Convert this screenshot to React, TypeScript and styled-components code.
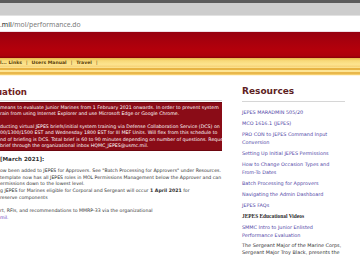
import React from 'react';
import styled, { createGlobalStyle } from 'styled-components';

const Global = createGlobalStyle`
  html, body { margin: 0; padding: 0; background: #fff; }
  body { width: 360px; height: 255px; overflow: hidden; font-family: "DejaVu Sans", Verdana, sans-serif; }
  * { box-sizing: border-box; }
`;

const Page = styled.div`
  width: 360px;
  height: 255px;
  overflow: hidden;
  display: flex;
  flex-direction: column;
  background: #fff;
`;

const TopStrip = styled.div`
  height: 3px;
  flex: none;
  background: #5b5b5b;
`;

const TabBar = styled.div`
  height: 13px;
  flex: none;
  background: #cdcdcd;
  border-bottom: 1px solid #e2e2e2;
`;

const AddressBar = styled.div`
  height: 16px;
  flex: none;
  display: flex;
  align-items: center;
  padding-top: 1px;
  background: #fff;
  border-bottom: 1px solid #efdfe6;
  font-family: "Noto Sans", "DejaVu Sans", sans-serif;
  font-size: 6.8px;
  color: #7a7a7a;
  white-space: nowrap;
`;

const Host = styled.span`
  color: #222;
`;

const SiteHeader = styled.div`
  height: 26px;
  flex: none;
  background: linear-gradient(#960010 0%, #a8000d 35%, #b4000b 70%, #ad000b 92%, #850008 100%);
`;

const NavBar = styled.div`
  height: 9px;
  flex: none;
  display: flex;
  align-items: center;
  gap: 4px;
  background: linear-gradient(#e9b447 0%, #f8d979 30%, #fde48f 70%, #f6d277 100%);
  font-size: 4.6px;
  font-weight: bold;
  color: #5a3c06;
  white-space: nowrap;
`;

const NavSep = styled.span`
  font-weight: normal;
  color: #6b4a10;
`;

const NavStripes = styled.div`
  height: 9px;
  flex: none;
  background: linear-gradient(
    #fbe08c 0px, #fbe08c 1px,
    #e7b344 1px, #e7b344 3px,
    #fde596 3px, #fde596 5px,
    #e9b84c 5px, #e9b84c 7px,
    #f7d57c 7px, #f3c860 8px,
    #fff6dc 8px, #fff6dc 9px
  );
`;

const Content = styled.div`
  flex: 1;
  display: flex;
  gap: 20px;
  overflow: hidden;
`;

const Main = styled.div`
  width: 222px;
  flex: none;
  overflow: hidden;
`;

const PageTitle = styled.h1`
  margin: 0;
  padding: 10px 0 2px;
  line-height: 12px;
  font-size: 8.6px;
  font-weight: bold;
  color: #701d22;
  border-bottom: 1px solid #d6d6d6;
  white-space: nowrap;
  text-indent: -4px;
`;

const Notice = styled.div`
  margin-top: 1px;
  padding: 2px 0 1px;
  background: #8a0c17;
  border-top: 1px solid #6d0710;
  border-bottom: 1px solid #6d0710;
  color: #fff;
  font-size: 4.72px;
`;

const Para = styled.div<{ $gap?: number }>`
  margin-top: ${(p) => p.$gap ?? 0}px;
`;

const Line = styled.div`
  line-height: 6.4px;
  white-space: nowrap;
`;

const SubHead = styled.div`
  margin-top: 4px;
  line-height: 8px;
  font-size: 5.6px;
  font-weight: bold;
  color: #333;
  white-space: nowrap;
`;

const Body = styled.div`
  font-size: 4.65px;
  color: #333;
`;

const BodyLine = styled.div`
  line-height: 6.3px;
  white-space: nowrap;
`;

const Item = styled.div<{ $gap?: number }>`
  margin-top: ${(p) => p.$gap ?? 0}px;
`;

const InlineLink = styled.span`
  color: #6a36b8;
`;

const Side = styled.div`
  width: 110px;
  flex: none;
`;

const SideTitle = styled.h2`
  margin: 0;
  width: 103px;
  padding: 9px 0 4px;
  line-height: 12px;
  font-size: 9px;
  font-weight: bold;
  color: #5e1f24;
  border-bottom: 1px solid #d6d6d6;
  white-space: nowrap;
`;

const LinkList = styled.div`
  display: flex;
  flex-direction: column;
  gap: 3px;
  padding-top: 6px;
`;

const SideLink = styled.a`
  display: block;
  font-size: 4.9px;
  line-height: 8px;
  color: #4f46a6;
  text-decoration: none;
  white-space: nowrap;
`;

const SideLabel = styled.div`
  font-family: "Liberation Serif", "Times New Roman", serif;
  font-size: 5.4px;
  font-weight: bold;
  line-height: 8px;
  color: #2b2b2b;
  white-space: nowrap;
`;

const SideText = styled.div`
  font-size: 4.9px;
  line-height: 6.5px;
  color: #333;
  white-space: nowrap;
`;

export default function App() {
  return (
    <>
      <Global />
      <Page>
        <TopStrip />
        <TabBar />
        <AddressBar>
          .<Host>mil</Host>/mol/performance.do
        </AddressBar>
        <SiteHeader />
        <NavBar>
          <span>l... Links</span>
          <NavSep>|</NavSep>
          <span>Users Manual</span>
          <NavSep>|</NavSep>
          <span>Travel</span>
          <NavSep>|</NavSep>
        </NavBar>
        <NavStripes />
        <Content>
          <Main>
            <PageTitle>uation</PageTitle>
            <Notice>
              <Para>
                <Line>means to evaluate Junior Marines from 1 February 2021 onwards. In order to prevent system</Line>
                <Line>rain from using Internet Explorer and use Microsoft Edge or Google Chrome.</Line>
              </Para>
              <Para $gap={6}>
                <Line>ducting virtual JEPES briefs/initial system training via Defense Collaboration Service (DCS) on</Line>
                <Line>00/1300/1500 EST and Wednesday 1800 EST for III MEF Units. Will flex from this schedule to</Line>
                <Line>nd of briefing is DCS. Total brief is 60 to 90 minutes depending on number of questions. Request</Line>
                <Line>brief through the organizational inbox HQMC_JEPES@usmc.mil.</Line>
              </Para>
            </Notice>
            <SubHead>[March 2021]:</SubHead>
            <Body>
              <Item $gap={5}>
                <BodyLine>ow been added to JEPES for Approvers. See "Batch Processing for Approvers" under Resources.</BodyLine>
                <BodyLine>template now has all JEPES roles in MOL Permissions Management below the Approver and can</BodyLine>
                <BodyLine>ermissions down to the lowest level.</BodyLine>
              </Item>
              <Item $gap={1}>
                <BodyLine>g JEPES for Marines eligible for Corporal and Sergeant will occur <b>1 April 2021</b> for</BodyLine>
                <BodyLine>reserve components</BodyLine>
              </Item>
              <Item $gap={7.5}>
                <BodyLine>rt, RFIs, and recommendations to MMRP-33 via the organizational</BodyLine>
                <BodyLine><InlineLink>mil.</InlineLink></BodyLine>
              </Item>
            </Body>
          </Main>
          <Side>
            <SideTitle>Resources</SideTitle>
            <LinkList>
              <SideLink href="#">JEPES MARADMIN 505/20</SideLink>
              <SideLink href="#">MCO 1616.1 (JEPES)</SideLink>
              <SideLink href="#">PRO CON to JEPES Command Input<br />Conversion</SideLink>
              <SideLink href="#">Setting Up Initial JEPES Permissions</SideLink>
              <SideLink href="#">How to Change Occasion Types and<br />From-To Dates</SideLink>
              <SideLink href="#">Batch Processing for Approvers</SideLink>
              <SideLink href="#">Navigating the Admin Dashboard</SideLink>
              <SideLink href="#">JEPES FAQs</SideLink>
              <SideLabel>JEPES Educational Videos</SideLabel>
              <SideLink href="#">SMMC Intro to Junior Enlisted<br />Performance Evaluation</SideLink>
              <SideText>The Sergeant Major of the Marine Corps,<br />Sergeant Major Troy Black, presents the</SideText>
            </LinkList>
          </Side>
        </Content>
      </Page>
    </>
  );
}
